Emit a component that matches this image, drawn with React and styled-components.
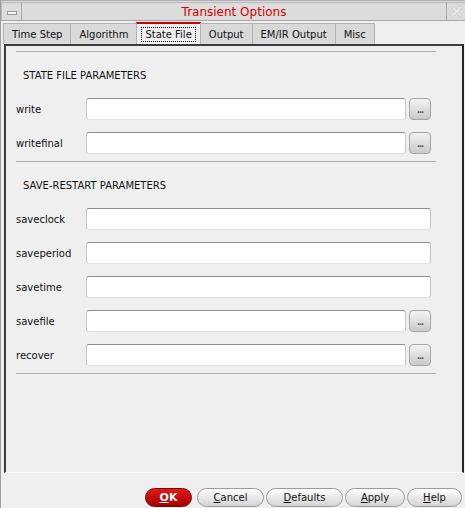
import React from 'react';
import styled, { createGlobalStyle } from 'styled-components';

const Global = createGlobalStyle`
  html, body { margin: 0; padding: 0; background: #efefef; }
  body { font-family: "DejaVu Sans", "Liberation Sans", sans-serif; font-size: 10px; color: #111; }
  #root { width: 465px; height: 508px; }
`;

const Window = styled.div`
  width: 465px;
  height: 508px;
  box-sizing: border-box;
  border-left: 1px solid #9c9c9c;
  background: #efefef;
  display: flex;
  flex-direction: column;
  overflow: hidden;
`;

const TitleBar = styled.div`
  flex: none;
  display: flex;
  height: 21px;
  box-sizing: border-box;
  padding-top: 1px;
  background: #dcdcdc;
  border-top: 1px solid #b0b0b0;
  border-bottom: 1px solid #a8a8a8;
`;

const TitleBox = styled.div`
  flex: none;
  width: ${p => p.$w}px;
  display: flex;
  align-items: center;
  justify-content: center;
  border-left: ${p => (p.$right ? '1px solid #a8a8a8' : '1px solid #b8b8b8')};
  border-right: ${p => (p.$right ? 'none' : '1px solid #a8a8a8')};
  border-top: 1px solid #b8b8b8;
`;

const MinGlyph = styled.div`
  width: 8px;
  height: 2px;
  border: 1px solid #9a9a9a;
  background: #f6f6f6;
  margin-top: 2px;
`;

const TitleText = styled.div`
  flex: 1;
  text-align: center;
  color: #d40000;
  font-size: 12px;
  line-height: 18px;
  border-top: 1px solid #b8b8b8;
`;

const TabBar = styled.div`
  flex: none;
  height: 23px;
  display: flex;
  align-items: flex-end;
  padding-left: 3px;
`;

const Tab = styled.div`
  height: ${p => (p.$sel ? 22 : 21)}px;
  box-sizing: border-box;
  padding: 0 ${p => (p.$sel ? 4 : 8)}px;
  margin-left: -1px;
  display: flex;
  align-items: center;
  justify-content: center;
  background: ${p => (p.$sel ? '#efefef' : '#d9d9d9')};
  border: 1px solid #b2b2b2;
  border-bottom: none;
  border-top: ${p => (p.$sel ? '2px solid #cc0000' : '1px solid #b2b2b2')};
  white-space: nowrap;
`;

const FocusLabel = styled.span`
  border: 1px dotted #000;
  padding: 0 3px;
  line-height: 13px;
`;

const Panel = styled.div`
  flex: none;
  height: 429px;
  box-sizing: border-box;
  margin: 0 1px 0 3px;
  border-top: 2px solid #3c3c3c;
  border-left: 2px solid #3c3c3c;
  border-right: 2px solid #262626;
  border-bottom: 1px solid #ffffff;
  padding: 5px 26px 0 10px;
`;

const Separator = styled.div`
  height: 0;
  border-top: 1px solid #b0b0b0;
`;

const Heading = styled.div`
  margin: 14px 0 6px;
  height: 20px;
  line-height: 20px;
  padding-left: 7px;
`;

const Rows = styled.div`
  margin-right: 5px;
  padding-bottom: 1px;
`;

const Row = styled.div`
  display: flex;
  align-items: center;
  height: 34px;
`;

const Label = styled.div`
  flex: none;
  width: 70px;
`;

const Field = styled.input`
  flex: 1;
  min-width: 0;
  height: 22px;
  box-sizing: border-box;
  margin: 0;
  padding: 0 4px;
  background: #fff;
  border: 1px solid #c6c6c6;
  border-top-color: #8e8e8e;
  border-bottom-color: #e2e2e2;
  border-radius: 3px;
  font: inherit;
  outline: none;
`;

const Browse = styled.button`
  flex: none;
  width: 22px;
  height: 22px;
  box-sizing: border-box;
  margin: 0 0 0 3px;
  padding: 4px 0 0;
  border: 1px solid #a6a6a6;
  border-radius: 4px;
  background: linear-gradient(#f4f4f4, #c9c9c9);
  color: #555;
  font-family: "DejaVu Sans", sans-serif;
  font-size: 8px;
  font-weight: bold;
  line-height: 10px;
  letter-spacing: -1px;
`;

const ButtonBar = styled.div`
  flex: 1;
  display: flex;
  justify-content: flex-end;
  align-items: flex-start;
  gap: 2px;
  padding: 15px 3px 0 0;
`;

const DlgButton = styled.button`
  width: ${p => p.$w}px;
  height: 19px;
  box-sizing: border-box;
  margin: 0 ${p => p.$mr || 0}px 0 0;
  padding: 0;
  border-radius: 10px;
  border: 1px solid ${p => (p.$primary ? '#7a0000' : '#9c9c9c')};
  background: ${p =>
    p.$primary ? 'linear-gradient(#e41818, #a40000)' : 'linear-gradient(#fefefe, #d4d4d4)'};
  color: ${p => (p.$primary ? '#fff' : '#111')};
  font-family: "DejaVu Sans", sans-serif;
  font-size: ${p => (p.$primary ? 11 : 10)}px;
  font-weight: ${p => (p.$primary ? 'bold' : 'normal')};
  line-height: 17px;
`;

const tabs = ['Time Step', 'Algorithm', 'State File', 'Output', 'EM/IR Output', 'Misc'];

function FieldRow({ label, browse }) {
  return (
    <Row>
      <Label>{label}</Label>
      <Field />
      {browse && <Browse>...</Browse>}
    </Row>
  );
}

export default function App() {
  return (
    <>
      <Global />
      <Window>
        <TitleBar>
          <TitleBox $w={19}>
            <MinGlyph />
          </TitleBox>
          <TitleText>Transient Options</TitleText>
          <TitleBox $w={18} $right>
            <svg width="13" height="13" viewBox="0 0 13 13">
              <path
                d="M1 2.5 L2.5 1 L6.5 5 L10.5 1 L12 2.5 L8 6.5 L12 10.5 L10.5 12 L6.5 8 L2.5 12 L1 10.5 L5 6.5 Z"
                fill="#ececec"
                stroke="#bdbdbd"
                strokeWidth="0.9"
                strokeDasharray="1.2 0.8"
              />
            </svg>
          </TitleBox>
        </TitleBar>
        <TabBar>
          {tabs.map(t =>
            t === 'State File' ? (
              <Tab key={t} $sel>
                <FocusLabel>{t}</FocusLabel>
              </Tab>
            ) : (
              <Tab key={t}>{t}</Tab>
            )
          )}
        </TabBar>
        <Panel>
          <Separator />
          <Heading>STATE FILE PARAMETERS</Heading>
          <Rows>
            <FieldRow label="write" browse />
            <FieldRow label="writefinal" browse />
          </Rows>
          <Separator />
          <Heading>SAVE-RESTART PARAMETERS</Heading>
          <Rows>
            <FieldRow label="saveclock" />
            <FieldRow label="saveperiod" />
            <FieldRow label="savetime" />
            <FieldRow label="savefile" browse />
            <FieldRow label="recover" browse />
          </Rows>
          <Separator />
        </Panel>
        <ButtonBar>
          <DlgButton $primary $w={47} $mr={3}>
            <u>O</u>K
          </DlgButton>
          <DlgButton $w={67}>
            <u>C</u>ancel
          </DlgButton>
          <DlgButton $w={77}>
            <u>D</u>efaults
          </DlgButton>
          <DlgButton $w={60}>
            <u>A</u>pply
          </DlgButton>
          <DlgButton $w={55}>
            <u>H</u>elp
          </DlgButton>
        </ButtonBar>
      </Window>
    </>
  );
}
